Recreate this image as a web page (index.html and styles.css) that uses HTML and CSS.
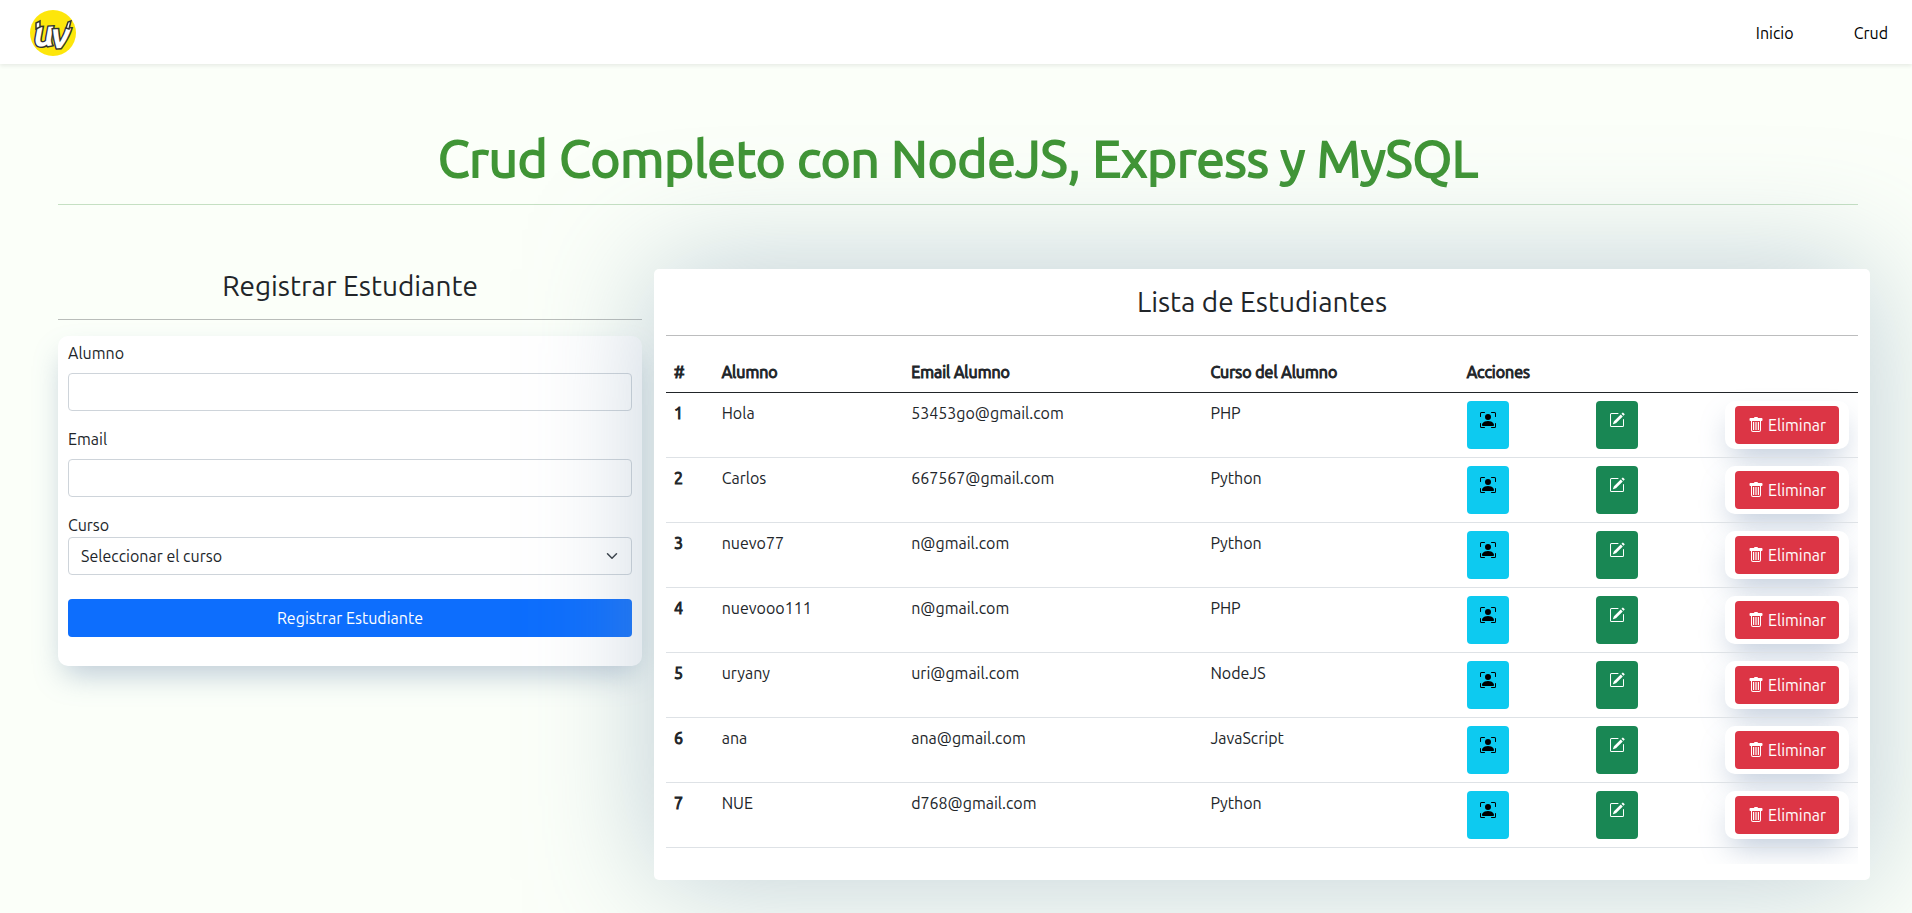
FILE: index.html
```html
<!DOCTYPE html>
<html lang="es">
<head>
<meta charset="utf-8">
<title>Crud Completo con NodeJS, Express y MySQL</title>
<link rel="stylesheet" href="styles.css">
</head>
<body>
<svg class="sprite" aria-hidden="true">
  <symbol id="person" viewBox="0 0 16 16">
    <path d="M1.5 1a.5.5 0 0 0-.5.5v3a.5.5 0 0 1-1 0v-3A1.5 1.5 0 0 1 1.5 0h3a.5.5 0 0 1 0 1h-3zM11 .5a.5.5 0 0 1 .5-.5h3A1.5 1.5 0 0 1 16 1.5v3a.5.5 0 0 1-1 0v-3a.5.5 0 0 0-.5-.5h-3a.5.5 0 0 1-.5-.5zM.5 11a.5.5 0 0 1 .5.5v3a.5.5 0 0 0 .5.5h3a.5.5 0 0 1 0 1h-3A1.5 1.5 0 0 1 0 14.5v-3a.5.5 0 0 1 .5-.5zm15 0a.5.5 0 0 1 .5.5v3a1.5 1.5 0 0 1-1.500 1.500h-3a.5.5 0 0 1 0-1h3a.5.5 0 0 0 .5-.5v-3a.5.5 0 0 1 .5-.5z"/>
    <path d="M3 14s-1 0-1-1 1-4 6-4 6 3 6 4-1 1-1 1H3zm8-9a3 3 0 1 1-6 0 3 3 0 0 1 6 0z"/>
  </symbol>
  <symbol id="pencil" viewBox="0 0 16 16">
    <path d="M15.502 1.940a.5.5 0 0 1 0 .706L14.459 3.690l-2-2L13.502.646a.5.5 0 0 1 .707 0l1.293 1.293zm-1.750 2.456-2-2L4.939 9.210a.5.5 0 0 0-.121.196l-.805 2.414a.25.25 0 0 0 .316.316l2.414-.805a.5.5 0 0 0 .196-.12l6.813-6.814z"/>
    <path fill-rule="evenodd" d="M1 13.500A1.500 1.500 0 0 0 2.500 15h11a1.500 1.500 0 0 0 1.500-1.500v-6a.5.5 0 0 0-1 0v6a.5.5 0 0 1-.5.5h-11a.5.5 0 0 1-.5-.5v-11a.5.5 0 0 1 .5-.5H9a.5.5 0 0 0 0-1H2.500A1.500 1.500 0 0 0 1 2.500v11z"/>
  </symbol>
  <symbol id="trash" viewBox="0 0 16 16">
    <path d="M5 5h1.200v8H5zM7.400 5h1.200v8H7.400zM9.800 5H11v8H9.800z"/>
    <path fill-rule="evenodd" d="M14.500 3a1 1 0 0 1-1 1H13v9a2 2 0 0 1-2 2H5a2 2 0 0 1-2-2V4h-.5a1 1 0 0 1-1-1V2a1 1 0 0 1 1-1H6a1 1 0 0 1 1-1h2a1 1 0 0 1 1 1h3.500a1 1 0 0 1 1 1v1zM4.118 4 4 4.059V13a1 1 0 0 0 1 1h6a1 1 0 0 0 1-1V4.059L11.882 4H4.118z"/>
  </symbol>
</svg>

<nav class="navbar">
  <a class="brand" href="#" aria-label="UV">
    <svg viewBox="0 0 46 46" width="46" height="46">
      <circle cx="23" cy="23" r="23" fill="#fde60b"/>
      <g class="brand-text">
        <text x="4" y="36" transform="rotate(-3 14 30)">u</text>
        <text x="21" y="38" transform="rotate(-3 30 30)">v</text>
      </g>
      <path d="M6 19v-6l4-2v6zM36 18l2-6 3-1-2 8z" fill="#fff" stroke="#333" stroke-width="1.500"/>
    </svg>
  </a>
  <div class="nav-links">
    <a href="#">Inicio</a>
    <a href="#">Crud</a>
  </div>
</nav>

<main class="container">
  <h1 class="title">Crud Completo con NodeJS, Express y MySQL</h1>
  <div class="row">
    <section class="register">
      <h3 class="subtitle">Registrar Estudiante</h3>
      <form class="panel">
        <div class="field">
          <label for="alumno">Alumno</label>
          <input class="control" id="alumno" type="text">
        </div>
        <div class="field">
          <label for="email">Email</label>
          <input class="control" id="email" type="email">
        </div>
        <div class="field field-tight">
          <label for="curso">Curso</label>
          <div class="select-wrap">
            <select class="control" id="curso">
              <option>Seleccionar el curso</option>
              <option>PHP</option>
              <option>Python</option>
              <option>NodeJS</option>
              <option>JavaScript</option>
            </select>
            <svg class="chevron" viewBox="0 0 16 16" width="12" height="12"><path d="m2 5 6 6 6-6" fill="none" stroke="#343a40" stroke-width="2" stroke-linecap="round" stroke-linejoin="round"/></svg>
          </div>
        </div>
        <button class="btn btn-primary" type="submit">Registrar Estudiante</button>
      </form>
    </section>

    <section class="list">
      <h3 class="subtitle">Lista de Estudiantes</h3>
      <div class="table-wrap">
        <table class="table">
          <colgroup>
            <col class="c-num"><col class="c-name"><col class="c-email"><col class="c-course"><col class="c-act"><col class="c-act"><col>
          </colgroup>
          <thead>
            <tr><th scope="col">#</th><th scope="col">Alumno</th><th scope="col">Email Alumno</th><th scope="col">Curso del Alumno</th><th scope="col" colspan="3">Acciones</th></tr>
          </thead>
          <tbody id="rows"></tbody>
        </table>
      </div>
    </section>
  </div>
</main>
<script src="rows.js"></script>
</body>
</html>
```
FILE: rows.js
```js
const students = [
  ["Hola", "53453go@gmail.com", "PHP"],
  ["Carlos", "667567@gmail.com", "Python"],
  ["nuevo77", "n@gmail.com", "Python"],
  ["nuevooo111", "n@gmail.com", "PHP"],
  ["uryany", "uri@gmail.com", "NodeJS"],
  ["ana", "ana@gmail.com", "JavaScript"],
  ["NUE", "d768@gmail.com", "Python"]
];

const icon = (name) => `<svg class="icon" aria-hidden="true"><use href="#${name}"/></svg>`;

document.getElementById("rows").innerHTML = students.map(([name, email, course], i) => `
  <tr>
    <th scope="row">${i + 1}</th>
    <td>${name}</td>
    <td>${email}</td>
    <td>${course}</td>
    <td><a class="btn btn-tall btn-info" href="#" aria-label="Ver">${icon("person")}</a></td>
    <td><a class="btn btn-tall btn-success" href="#" aria-label="Editar">${icon("pencil")}</a></td>
    <td><form class="delete"><button class="btn btn-danger" type="submit">${icon("trash")} Eliminar</button></form></td>
  </tr>`).join("");
```
FILE: styles.css
```css
*, *::before, *::after { box-sizing: border-box; }

body {
  margin: 0;
  min-height: 100vh;
  overflow: hidden;
  background: #fbfff9;
  color: #212529;
  font-family: Ubuntu, "Noto Sans", sans-serif;
  font-size: 16px;
  line-height: 24px;
}

.sprite { display: none; }

.navbar {
  display: flex;
  align-items: center;
  justify-content: space-between;
  height: 64px;
  padding: 2px 24px 0 30px;
  background: #fff;
  box-shadow: 0 2px 4px rgba(0, 0, 0, .08);
}
.brand svg { display: block; }
.brand-text {
  font: italic 700 36px Ubuntu, "Open Sans", sans-serif;
  fill: #fff;
  stroke: #333;
  stroke-width: 3px;
  stroke-linejoin: miter;
  paint-order: stroke;
}
.nav-links { display: flex; gap: 60px; }
.nav-links a { color: #000; text-decoration: none; }

.container { padding: 64px 54px 32px 58px; }

.title {
  margin: 0 0 64px;
  padding-bottom: 16px;
  border-bottom: 1px solid #c5e0c3;
  color: #409536;
  font-size: 51px;
  font-weight: 400;
  line-height: 60px;
  text-align: center;
  -webkit-text-stroke: 2px #409536;
}

.row {
  display: grid;
  grid-template-columns: 1fr 2fr;
  margin: 0 -12px;
}
.register { padding: 0 12px; }

.subtitle {
  margin: 0 0 16px;
  padding-bottom: 16px;
  border-bottom: 1px solid rgba(33, 37, 41, .3);
  font-size: 28px;
  font-weight: 400;
  line-height: 34px;
  text-align: center;
}

.panel {
  padding: 5px 10px 29px;
  border-radius: 10px;
  background: #fff;
  box-shadow: 0 14px 30px -6px rgba(90, 120, 160, .4);
}
.field { margin-bottom: 16px; }
.field label { display: block; margin-bottom: 8px; }
.field-tight { margin-bottom: 24px; }
.field-tight label { margin-bottom: 0; }

.control {
  display: block;
  width: 100%;
  height: 38px;
  padding: 6px 12px;
  border: 1px solid #ced4da;
  border-radius: 4px;
  background: #fff;
  color: #212529;
  font: inherit;
  appearance: none;
}
.select-wrap { position: relative; }
.chevron { position: absolute; right: 14px; top: 13px; pointer-events: none; }

.btn {
  display: inline-block;
  padding: 7px 13px;
  border: 0;
  border-radius: 4px;
  color: #fff;
  font: inherit;
  text-decoration: none;
  white-space: nowrap;
}
.btn-primary { display: block; width: 100%; background: #0d6efd; }
.btn-danger { background: #dc3545; }
.btn-info { background: #0dcaf0; color: #000; }
.btn-success { background: #198754; }
.btn-tall { display: block; width: 42px; height: 48px; }

.icon {
  width: 16px;
  height: 16px;
  fill: currentColor;
  vertical-align: -2px;
}

.list {
  position: relative;
  padding: 16px 12px;
  border-radius: 5px;
  background: #fff;
  box-shadow: 0 0 120px rgba(130, 155, 180, .5);
}

.table-wrap { overflow: hidden; padding-bottom: 16px; }
.table {
  width: 100%;
  table-layout: fixed;
  border-collapse: collapse;
}
.table th, .table td {
  padding: 8px;
  border-bottom: 1px solid #dee2e6;
  text-align: left;
  vertical-align: top;
}
.table thead th { border-bottom-color: #212529; }
.table th { font-weight: 400; -webkit-text-stroke: 1px #212529; }
.c-num { width: 4%; }
.c-name { width: 15.9%; }
.c-email { width: 25.1%; }
.c-course { width: 21.5%; }
.c-act { width: 10.85%; }

.delete {
  width: max-content;
  padding: 5px 10px;
  border-radius: 10px;
  background: #fff;
  box-shadow: 0 14px 30px -6px rgba(90, 120, 160, .4);
}
.delete .btn { display: block; }
```
